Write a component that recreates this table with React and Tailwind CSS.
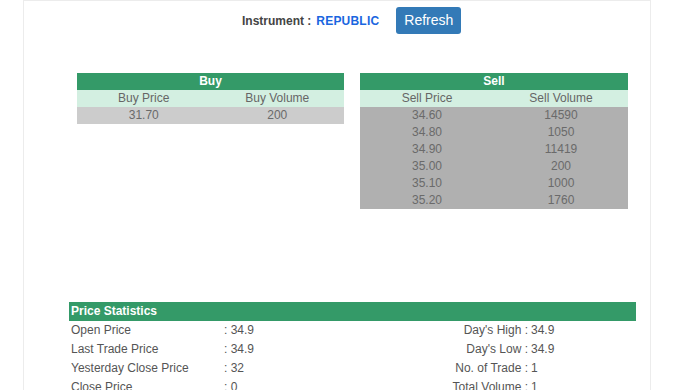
import React from 'react';

const buyRows = [{ price: '31.70', volume: '200' }];

const sellRows = [
  { price: '34.60', volume: '14590' },
  { price: '34.80', volume: '1050' },
  { price: '34.90', volume: '11419' },
  { price: '35.00', volume: '200' },
  { price: '35.10', volume: '1000' },
  { price: '35.20', volume: '1760' },
];

const stats = [
  { left: 'Open Price', leftVal: '34.9', right: "Day's High", rightVal: '34.9' },
  { left: 'Last Trade Price', leftVal: '34.9', right: "Day's Low", rightVal: '34.9' },
  { left: 'Yesterday Close Price', leftVal: '32', right: 'No. of Trade', rightVal: '1' },
  { left: 'Close Price', leftVal: '0', right: 'Total Volume', rightVal: '1' },
];

const OrderTable = ({ title, cols, rows, rowBg, width }) => (
  <div className={`${width} text-[12px] leading-[17px]`}>
    <div className="bg-[#349a68] text-white font-bold text-center h-[17px]">{title}</div>
    <div className="grid grid-cols-2 bg-[#d3efe1] text-[#666] text-center h-[17px]">
      <div>{cols[0]}</div>
      <div>{cols[1]}</div>
    </div>
    {rows.map((r) => (
      <div key={r.price} className={`grid grid-cols-2 ${rowBg} text-[#6a6a6a] text-center h-[17px]`}>
        <div>{r.price}</div>
        <div>{r.volume}</div>
      </div>
    ))}
  </div>
);

const App = () => {
  return (
    <div className="w-[700px] h-[390px] overflow-hidden bg-white font-['Liberation_Sans',Arial,sans-serif]">
      <div className="ml-[23px] w-[628px] h-full border-x border-t border-[#ececec]">
        {/* Instrument header */}
        <div className="flex items-center pt-[6px] pl-[218px]">
          <span className="text-[12px] font-bold text-[#444]">Instrument :</span>
          <span className="ml-[5px] text-[12px] font-bold text-[#1a66e0] tracking-[0.2px]">REPUBLIC</span>
          <button className="ml-[17px] h-[27px] px-[8px] rounded-[3px] bg-[#337ab7] text-white text-[14px]">
            Refresh
          </button>
        </div>

        {/* Order book */}
        <div className="flex items-start gap-[16px] ml-[53px] mt-[39px]">
          <OrderTable title="Buy" cols={['Buy Price', 'Buy Volume']} rows={buyRows} rowBg="bg-[#cccccc]" width="w-[267px]" />
          <OrderTable title="Sell" cols={['Sell Price', 'Sell Volume']} rows={sellRows} rowBg="bg-[#b0b0b0]" width="w-[268px]" />
        </div>

        {/* Price statistics */}
        <div className="ml-[45px] w-[567px] mt-[93px] text-[12px] text-[#555]">
          <div className="bg-[#349a68] text-white font-bold h-[19px] leading-[19px] pl-[2px]">Price Statistics</div>
          {stats.map((s) => (
            <div key={s.left} className="flex h-[19px] leading-[19px]">
              <div className="w-[155px] pl-[2px]">{s.left}</div>
              <div className="w-[150px]">: {s.leftVal}</div>
              <div className="flex-1 text-right">{s.right} :</div>
              <div className="w-[108px] pl-[3px]">{s.rightVal}</div>
            </div>
          ))}
        </div>
      </div>
    </div>
  );
};

export default App;
